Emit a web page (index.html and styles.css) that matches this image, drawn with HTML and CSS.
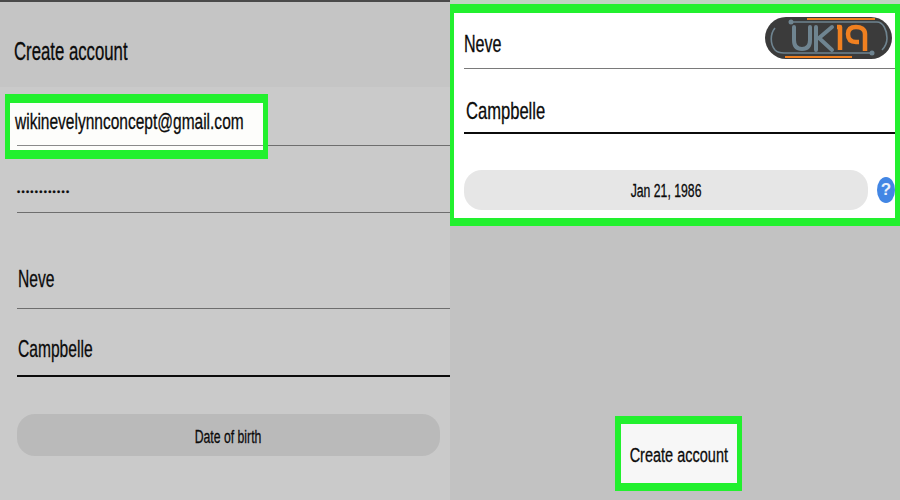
FILE: index.html
```html
<!DOCTYPE html>
<html lang="en">
<head>
<meta charset="utf-8">
<title>Create account</title>
<link rel="stylesheet" href="styles.css">
</head>
<body>
<main class="page">
  <section class="left">
    <header class="left-header"><h1 class="title">Create account</h1></header>
    <div class="left-form">
      <div class="field field-email">
        <span class="highlight"></span>
        <span class="value value-email">wikinevelynnconcept@gmail.com</span>
      </div>
      <div class="field field-pass"><span class="dots">••••••••••••</span></div>
      <div class="field field-first"><span class="value">Neve</span></div>
      <div class="field field-last"><span class="value">Campbelle</span></div>
      <button class="pill pill-dark" type="button"><span class="label">Date of birth</span></button>
    </div>
  </section>
  <section class="right">
    <div class="card">
      <div class="rfield rfield-first"><span class="value value-mid">Neve</span></div>
      <div class="rfield rfield-last"><span class="value value-wide">Campbelle</span></div>
      <div class="date-row">
        <button class="pill pill-light" type="button"><span class="label">Jan 21, 1986</span></button>
        <span class="help">?</span>
      </div>
      <svg class="logo" viewBox="0 0 127 42" width="127" height="42" aria-label="UK19 logo">
        <rect x="0" y="0" width="127" height="42" rx="21" fill="#3b3b3b"/>
        <path d="M10 11C5 17 5 27 10 33C12 35 15 36 19 36H107" class="lg-thin"/>
        <path d="M26 5H112C118 5 122 13 122 21C122 26 120 30 117 33" class="lg-thin"/>
        <circle cx="26" cy="5" r="2.5" fill="#6f8490"/>
        <circle cx="107" cy="36" r="2.5" fill="#6f8490"/>
        <path d="M29 10V23C29 29 32 32 37 32C42 32 45 29 45 23V10" class="lg-mark"/>
        <path d="M51 10V33M67 10L54 21L67 33" class="lg-mark"/>
        <path d="M72 10H75V33" class="lg-orange"/>
        <path d="M100 34V17C100 12 96 10 91 10C85 10 83 13 83 17C83 22 85 25 91 25H94" class="lg-orange"/>
        <path d="M42 2H110" class="lg-bar"/>
        <path d="M20 40H87" class="lg-bar"/>
      </svg>
    </div>
    <button class="create-btn" type="button"><span class="label label-create">Create account</span></button>
  </section>
</main>
</body>
</html>
```
FILE: styles.css
```css
* { box-sizing: border-box; }
html, body { margin: 0; padding: 0; }
body {
  width: 900px;
  height: 500px;
  overflow: hidden;
  background: #c6c6c6;
  font-family: "Liberation Sans", Arial, sans-serif;
  color: #0b0b0b;
  -webkit-text-stroke: 0.3px #0b0b0b;
}
button { font-family: inherit; color: inherit; border: 0; padding: 0; }

.page { display: flex; width: 900px; height: 500px; }

.left {
  width: 450px;
  height: 500px;
  display: flex;
  flex-direction: column;
  background: #cacaca;
  border-top: 2px solid #4a4a4a;
}
.left-header {
  height: 85px;
  background: #c5c5c5;
  display: flex;
  align-items: center;
  padding: 13px 0 0 14px;
}
.title {
  margin: 0;
  font-size: 25px;
  font-weight: 400;
  line-height: 30px;
  white-space: nowrap;
  transform: scaleX(0.67);
  transform-origin: left center;
}
.left-form { display: flex; flex-direction: column; padding-left: 17px; }

.field {
  position: relative;
  display: flex;
  align-items: flex-end;
  border-bottom: 1px solid #6e6e6e;
}
.value {
  position: relative;
  display: inline-block;
  font-size: 24px;
  line-height: 30px;
  white-space: nowrap;
  transform: scaleX(0.65);
  transform-origin: left center;
}
.value-mid { transform: scaleX(0.67); }
.value-wide { transform: scaleX(0.69); }
.field-email { height: 59px; padding-bottom: 8px; }
.field-pass { height: 67px; padding-bottom: 10px; }
.field-first { height: 96px; padding-bottom: 14px; padding-left: 1px; }
.field-last { height: 68px; padding-bottom: 11px; padding-left: 1px; border-bottom: 2px solid #0b0b0b; }
.value-email { margin-left: -2px; font-size: 22px; transform: scaleX(0.705); }
.highlight {
  position: absolute;
  left: -12px;
  top: 7px;
  width: 263px;
  height: 65px;
  background: #fdfdfb;
  border: solid #22f02e;
  border-width: 9px 5px 9px 5px;
}
.field-email::after {
  content: "";
  position: absolute;
  left: 0;
  bottom: -1px;
  width: 246px;
  height: 1px;
  background: #8a8a8a;
}
.dots { font-size: 9px; line-height: 20px; letter-spacing: 1.3px; }

.pill {
  display: flex;
  align-items: center;
  justify-content: center;
  font-size: 18px;
  border-radius: 18px;
}
.label { display: inline-block; flex: none; white-space: nowrap; transform: scaleX(0.68); }
.pill-dark { width: 423px; height: 42px; margin-top: 37px; padding-top: 4px; background: #bababa; }
.pill-light { width: 405px; height: 40px; padding-top: 2px; background: #e6e6e6; }

.right {
  position: relative;
  width: 450px;
  height: 500px;
  display: flex;
  flex-direction: column;
  background: #c2c2c2;
  padding-top: 4px;
}
.right::before {
  content: "";
  position: absolute;
  left: 0;
  top: 0;
  width: 100%;
  height: 4px;
  background: #c0d4c2;
}
.card {
  position: relative;
  height: 222px;
  display: flex;
  flex-direction: column;
  background: #fff;
  border: solid #22f02e;
  border-width: 9px 5px 8px 4px;
  padding-left: 10px;
}
.rfield { display: flex; align-items: flex-end; border-bottom: 1px solid #7a7a7a; }
.rfield-first { height: 56px; padding-bottom: 9px; }
.rfield-last { height: 65px; padding-bottom: 6px; padding-left: 2px; border-bottom: 2px solid #0b0b0b; }
.date-row { display: flex; align-items: center; margin-top: 36px; gap: 9px; }
.help {
  width: 18px;
  height: 26px;
  border-radius: 50%;
  background: #4286e4;
  color: #e9f0fb;
  -webkit-text-stroke: 0;
  font-size: 17px;
  font-weight: 700;
  line-height: 26px;
  text-align: center;
}
.logo { position: absolute; left: 311px; top: 4px; }
.lg-thin { fill: none; stroke: #6f8490; stroke-width: 1.6; }
.lg-mark { fill: none; stroke: #6f8490; stroke-width: 4; stroke-linecap: round; stroke-linejoin: round; }
.lg-orange { fill: none; stroke: #f08020; stroke-width: 4.5; stroke-linejoin: round; }
.lg-bar { fill: none; stroke: #f08020; stroke-width: 2; }

.create-btn {
  display: flex;
  align-items: center;
  justify-content: center;
  width: 127px;
  height: 75px;
  margin: auto 0 9px 165px;
  padding-top: 4px;
  background: #f7f7f7;
  border: solid #22f02e;
  border-width: 8px 5px 8px 6px;
  font-size: 20px;
}
.label-create { transform: scaleX(0.725); }
```
